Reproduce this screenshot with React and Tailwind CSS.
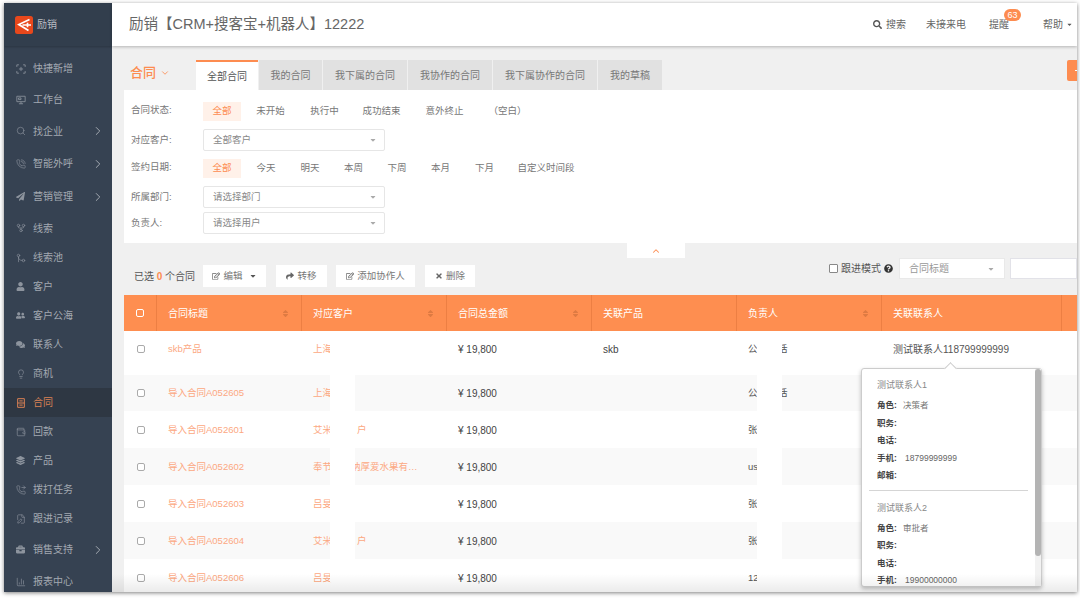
import { FaSearch, FaCaretDown, FaShare, FaTimes, FaQuestionCircle, FaSort, FaRegEdit, FaUser, FaComments, FaPaperPlane, FaBriefcase, FaLayerGroup, FaUserFriends } from 'react-icons/fa'
import { ChevronDown, ChevronRight, ChevronUp, Search, PhoneCall, Lightbulb, Wallet, FilePen, ChartColumn, GitFork, GitMerge, PhoneForwarded } from 'lucide-react'

function QuickAddIcon({ className }) {
  return (
    <svg viewBox="0 0 12 12" className={className} fill="none" stroke="currentColor" strokeWidth="1">
      <path d="M1 3.500V1h2.500M8.500 1H11v2.500M11 8.500V11H8.500M3.500 11H1V8.500M6 3.500v5M3.500 6h5" />
    </svg>
  )
}

function DeskIcon({ className }) {
  return (
    <svg viewBox="0 0 12 12" className={className} fill="none" stroke="currentColor" strokeWidth="1">
      <path d="M1 1.500h10v6.500H1zM6 8v2.500M3.500 10.500h5M3 3.500h3v2H3z" />
    </svg>
  )
}

function ContractIcon({ className }) {
  return (
    <svg viewBox="0 0 12 12" className={className} fill="none" stroke="currentColor" strokeWidth="1.200">
      <path d="M2 .8h8v10.400H2zM4 3.500h4M2 6h8M4 8.500h4" />
    </svg>
  )
}

const menu = [
  { label: '快捷新增', icon: QuickAddIcon, h: 'h-[31px]' },
  { label: '工作台', icon: DeskIcon, h: 'h-[31px]' },
  { label: '找企业', icon: Search, arrow: true, h: 'h-[32px]' },
  { label: '智能外呼', icon: PhoneCall, arrow: true, h: 'h-[33px]' },
  { label: '营销管理', icon: FaPaperPlane, arrow: true, h: 'h-[33px]', small: true },
  { label: '线索', icon: GitFork, h: 'h-[30px]' },
  { label: '线索池', icon: GitMerge, h: 'h-[29px]' },
  { label: '客户', icon: FaUser, h: 'h-[29px]', small: true },
  { label: '客户公海', icon: FaUserFriends, h: 'h-[29px]', small: true },
  { label: '联系人', icon: FaComments, h: 'h-[29px]', small: true },
  { label: '商机', icon: Lightbulb, h: 'h-[29px]' },
  { label: '合同', icon: ContractIcon, h: 'h-[29px]', active: true },
  { label: '回款', icon: Wallet, h: 'h-[29px]' },
  { label: '产品', icon: FaLayerGroup, h: 'h-[29px]', small: true },
  { label: '拨打任务', icon: PhoneForwarded, h: 'h-[29px]' },
  { label: '跟进记录', icon: FilePen, h: 'h-[29px]' },
  { label: '销售支持', icon: FaBriefcase, arrow: true, h: 'h-[33px]', small: true },
  { label: '报表中心', icon: ChartColumn, h: 'h-[31px]' },
]

const tabs = [
  { label: '全部合同', w: 'w-[62px]', active: true },
  { label: '我的合同', w: 'w-[63px]' },
  { label: '我下属的合同', w: 'w-[84px]' },
  { label: '我协作的合同', w: 'w-[84px]' },
  { label: '我下属协作的合同', w: 'w-[104px]' },
  { label: '我的草稿', w: 'w-[64px]' },
]

const rows = [
  { title: 'skb产品', customer: '上海', owner: '公', owner2: '话', product: 'skb', contact: '测试联系人118799999999', h: 'h-[44px] pb-[8px]' },
  { title: '导入合同A052605', customer: '上海', owner: '公', owner2: '话', h: 'h-[36px]', alt: true },
  { title: '导入合同A052601', customer: '艾米', customer2: '户', shift: 'ml-[1px]', owner: '张', h: 'h-[37px] pt-[1px]' },
  { title: '导入合同A052602', customer: '奉节', customer2: '纳厚爱水果有…', shift: '-ml-[5px]', owner: 'us', h: 'h-[37px] pt-[1px]', alt: true },
  { title: '导入合同A052603', customer: '吕旻', owner: '张', h: 'h-[37px] pt-[1px]' },
  { title: '导入合同A052604', customer: '艾米', customer2: '户', shift: 'ml-[1px]', owner: '张', h: 'h-[37px] pt-[1px]', alt: true },
  { title: '导入合同A052606', customer: '吕旻', owner: '12', h: 'h-[37px] pt-[1px]' },
]

const columns = [
  { label: '合同标题', w: 'w-[145px]', sort: true },
  { label: '对应客户', w: 'w-[145px]', sort: true },
  { label: '合同总金额', w: 'w-[145px]', sort: true },
  { label: '关联产品', w: 'w-[145px]' },
  { label: '负责人', w: 'w-[145px]', sort: true },
  { label: '关联联系人', w: 'w-[180px]' },
]

function Logo() {
  return (
    <svg viewBox="0 0 18 18" className="w-[18px] h-[18px]">
      <rect width="18" height="18" rx="2.500" fill="#e8481c" />
      <path d="M14.500 3.500 L3.800 8.600 L13.500 14.500 M7.500 9 L16 9 M12.500 6.800 L12.500 11.200" stroke="#fff" strokeWidth="1.700" fill="none" />
    </svg>
  )
}

function Sidebar() {
  return (
    <aside className="w-[108px] shrink-0 bg-[#364252] text-[#a3a9b1] text-[10px] flex flex-col">
      <div className="h-[43px] shrink-0 bg-[#323e4d] flex items-center pl-[11px] gap-[4px] text-[#b9bdc3] shadow-[0_1px_2px_rgba(0,0,0,0.2)]">
        <Logo />
        <span>励销</span>
      </div>
      <div className="pt-[7px]">
        {menu.map((m) => {
          const Icon = m.icon
          return (
            <div key={m.label} className={`${m.h} flex items-center pl-[12px] pr-[7px] ${m.active ? 'bg-[#2e3743] text-[#d98155]' : ''}`}>
              <span className={`w-[9px] flex justify-center mr-[8px] ${m.active ? '' : 'text-[#8d949e]'}`}>
                <Icon className={m.small ? 'w-[9px] h-[9px] shrink-0' : 'w-[10px] h-[10px] shrink-0'} strokeWidth={m.small ? undefined : 1.500} />
              </span>
              <span className="text-[10px]">{m.label}</span>
              {m.arrow && <ChevronRight className="w-[14px] h-[14px] ml-auto" strokeWidth={1.700} />}
            </div>
          )
        })}
      </div>
    </aside>
  )
}

function Topbar() {
  return (
    <header className="h-[43px] shrink-0 bg-white flex items-center pl-[17px] pr-[4px] shadow-[0_1px_3px_rgba(0,0,0,0.25)] relative z-10">
      <h1 className="text-[14.500px] text-[#666] font-normal">励销【CRM+搜客宝+机器人】12222</h1>
      <div className="ml-auto flex items-center text-[10px] text-[#666]">
        <FaSearch className="w-[9px] h-[9px] text-[#555] mr-[4px]" />
        <span className="mr-[20px]">搜索</span>
        <span className="mr-[23px]">未接来电</span>
        <span className="relative mr-[34px]">
          提醒
          <span className="absolute left-[15px] -top-[8px] w-[17px] h-[12px] rounded-full bg-[#fd8c50] text-white text-[9px] leading-[12px] text-center">63</span>
        </span>
        <span>帮助</span>
        <FaCaretDown className="w-[7px] h-[7px] ml-[3px] text-[#555]" />
      </div>
    </header>
  )
}

function Chip({ children, active, className = '' }) {
  return (
    <span className={`h-[19px] flex items-center justify-center text-[9.500px] ${active ? 'bg-[#fff1e9] text-[#fd8c50]' : 'text-[#777]'} ${className}`}>
      {children}
    </span>
  )
}

function Select({ text }) {
  return (
    <div className="w-[182px] h-[22px] border border-[#e6e6e6] rounded-[2px] bg-white flex items-center px-[9px] pr-[7px] text-[9.500px] text-[#888]">
      <span>{text}</span>
      <FaCaretDown className="w-[8px] h-[8px] ml-auto text-[#aaa]" />
    </div>
  )
}

function FilterRow({ label, children, select, className = '' }) {
  return (
    <div className={`flex items-start ${className}`}>
      <span className={`w-[79px] pl-[7px] text-[9.500px] text-[#777] ${select ? 'leading-[22px]' : 'leading-[14px] pt-[1px]'}`}>{label}</span>
      {children}
    </div>
  )
}

function Filters() {
  return (
    <section className="h-[153px] bg-white pt-[12px] flex flex-col text-[#777] shrink-0">
      <FilterRow label="合同状态:" className="h-[27px]">
        <div className="flex">
          <Chip active className="w-[38px]">全部</Chip>
          <Chip className="w-[59px]">未开始</Chip>
          <Chip className="w-[49px]">执行中</Chip>
          <Chip className="w-[65px]">成功结束</Chip>
          <Chip className="w-[61px]">意外终止</Chip>
          <Chip className="w-[65px]">（空白）</Chip>
        </div>
      </FilterRow>
      <FilterRow select label="对应客户:" className="h-[30px]">
        <Select text="全部客户" />
      </FilterRow>
      <FilterRow label="签约日期:" className="h-[27px]">
        <div className="flex">
          <Chip active className="w-[38px]">全部</Chip>
          <Chip className="w-[50px]">今天</Chip>
          <Chip className="w-[38px]">明天</Chip>
          <Chip className="w-[49px]">本周</Chip>
          <Chip className="w-[38px]">下周</Chip>
          <Chip className="w-[49px]">本月</Chip>
          <Chip className="w-[39px]">下月</Chip>
          <Chip className="w-[84px]">自定义时间段</Chip>
        </div>
      </FilterRow>
      <FilterRow select label="所属部门:" className="h-[26px]">
        <Select text="请选择部门" />
      </FilterRow>
      <FilterRow select label="负责人:" className="h-[22px]">
        <Select text="请选择用户" />
      </FilterRow>
    </section>
  )
}

function ToolButton({ icon: Icon, children, caret, className = '' }) {
  return (
    <button className={`h-[22px] bg-white flex items-center justify-center gap-[3px] text-[9.500px] text-[#777] ${className}`}>
      <Icon className="w-[8px] h-[8px] text-[#666]" />
      {children}
      {caret && <FaCaretDown className="w-[8px] h-[8px] ml-[3px] text-[#555]" />}
    </button>
  )
}

function Toolbar() {
  return (
    <div className="h-[52px] shrink-0 relative flex items-start">
      <div className="absolute left-[503px] top-0 w-[58px] h-[15px] bg-white flex items-center justify-center">
        <ChevronUp className="w-[10px] h-[10px] text-[#fd8c50]" strokeWidth={2.500} />
      </div>
      <div className="flex items-center mt-[22px]">
        <span className="w-[79px] pl-[10px] text-[10px] text-[#555]">已选 <b className="text-[#fd8c50] font-bold">0</b> 个合同</span>
        <ToolButton icon={FaRegEdit} caret className="w-[63px] mr-[10px]">编辑</ToolButton>
        <ToolButton icon={FaShare} className="w-[51px] mr-[9px]">转移</ToolButton>
        <ToolButton icon={FaRegEdit} className="w-[79px] mr-[10px]">添加协作人</ToolButton>
        <ToolButton icon={FaTimes} className="w-[50px]">删除</ToolButton>
      </div>
      <div className="ml-auto flex items-center mt-[15px]">
        <span className="w-[9px] h-[9px] border border-[#888] rounded-[1px] bg-white mr-[3px]"></span>
        <span className="text-[10px] text-[#555] mr-[3px]">跟进模式</span>
        <FaQuestionCircle className="w-[9px] h-[9px] text-[#333] mr-[6px]" />
        <div className="w-[106px] h-[21px] bg-white border border-[#e9e9e9] flex items-center px-[9px] text-[10px] text-[#999] mr-[5px]">
          合同标题
          <FaCaretDown className="w-[8px] h-[8px] ml-auto text-[#aaa]" />
        </div>
        <div className="w-[67px] h-[21px] bg-white border border-[#e2e2e8]"></div>
      </div>
    </div>
  )
}

function Checkbox({ light }) {
  return <span className={`block w-[8px] h-[8px] rounded-[2px] border ${light ? 'border-white' : 'border-[#aaa] bg-white'}`}></span>
}

function Table() {
  return (
    <div className="flex-1 min-h-0 overflow-hidden">
      <div className="h-[36px] flex bg-[#fe8e50] text-white text-[10px]">
        <div className="w-[33px] flex items-center justify-center border-r border-[#ed7f43]"><Checkbox light /></div>
        {columns.map((c) => (
          <div key={c.label} className={`${c.w} shrink-0 flex items-center px-[11px] border-r border-[#ed7f43]`}>
            <span>{c.label}</span>
            {c.sort && <FaSort className="ml-auto w-[9px] h-[9px] text-[#de7a42]" />}
          </div>
        ))}
        <div className="flex-1"></div>
      </div>
      {rows.map((r) => (
        <div key={r.title} className={`${r.h} flex items-center text-[9.500px] text-[#555] ${r.alt ? 'bg-[#f9f9f9]' : 'bg-white'}`}>
          <div className="w-[33px] shrink-0 flex justify-center"><Checkbox /></div>
          <div className="w-[145px] shrink-0 pl-[11px] text-[#fca882]">{r.title}</div>
          <div className="w-[145px] shrink-0 pl-[11px] text-[#fca882] flex">
            <span className="w-[43px]">{r.customer}</span>
            {r.customer2 && <span className={r.shift}>{r.customer2}</span>}
          </div>
          <div className="w-[145px] shrink-0 pl-[11px] text-[10px] text-[#444]">¥ 19,800</div>
          <div className="w-[145px] shrink-0 pl-[11px] text-[10px] text-[#444]">{r.product}</div>
          <div className="w-[145px] shrink-0 pl-[11px] flex">
            <span className="w-[30px]">{r.owner}</span>
            {r.owner2 && <span>{r.owner2}</span>}
          </div>
          <div className="w-[180px] shrink-0 pl-[11px] text-[10px]">{r.contact}</div>
        </div>
      ))}
    </div>
  )
}

function ContactBlock({ name, items }) {
  return (
    <div>
      <div className="text-[9px] text-[#888] h-[14px] leading-[14px]">{name}</div>
      <div className="mt-[5px]">
        {items.map(([k, v]) => (
          <div key={k} className="h-[17.500px] flex items-center text-[8.500px]">
            <b className="text-[#444] font-bold w-[26px] shrink-0">{k}:</b>
            <span className={k === '手机' ? 'text-[#666] ml-[2px]' : 'text-[#777]'}>{v}</span>
          </div>
        ))}
      </div>
    </div>
  )
}

function ContactPopover() {
  return (
    <div className="absolute left-[857px] top-[365px] w-[181px] h-[219px] bg-white border border-[#ccc] rounded-[3px] shadow-[0_2px_4px_rgba(0,0,0,0.25)] z-20">
      <span className="absolute left-[84px] -top-[5px] w-[9px] h-[9px] rotate-45 bg-white border-l border-t border-[#ccc]"></span>
      <div className="h-full overflow-hidden pl-[15px] pt-[9px] relative">
        <ContactBlock name="测试联系人1" items={[['角色', '决策者'], ['职务', ''], ['电话', ''], ['手机', '18799999999'], ['邮箱', '']]} />
        <div className="h-px bg-[#d5d5d5] -ml-[8px] mr-[13px] mt-[5px] mb-[10px]"></div>
        <ContactBlock name="测试联系人2" items={[['角色', '审批者'], ['职务', ''], ['电话', ''], ['手机', '19900000000']]} />
        <div className="absolute right-0 top-0 w-[6px] h-full bg-[#f2f2f2]">
          <div className="h-[187px] bg-[#b4b4b4] rounded-[3px]"></div>
        </div>
      </div>
    </div>
  )
}

export default function App() {
  return (
    <div className="w-[1080px] h-[598px] bg-white pl-[4px] pt-[3px] font-['Liberation_Sans','Noto_Sans_CJK_SC',sans-serif] overflow-hidden">
      <div className="w-[1073px] h-[589px] flex relative overflow-hidden shadow-[0_1px_4px_rgba(0,0,0,0.5)]">
        <Sidebar />
        <div className="flex-1 min-w-0 flex flex-col bg-[#f0f0f0]">
          <Topbar />
          <div className="flex-1 min-h-0 flex flex-col pl-[12px]">
            <div className="h-[44px] shrink-0 flex items-end relative">
              <div className="w-[72px] flex items-center gap-[4px] pl-[6px] text-[13px] font-medium text-[#fd8c50] self-center mt-[10px]">
                合同
                <ChevronDown className="w-[10px] h-[10px] text-[#fd8c50]" strokeWidth={2} />
              </div>
              <div className="flex h-[30px]">
                {tabs.map((t) => (
                  <div key={t.label} className={`${t.w} mr-px flex items-center justify-center text-[10px] ${t.active ? 'bg-white text-[#555] border-t-2 border-[#fd8c50]' : 'bg-[#e1e1e1] text-[#777]'}`}>
                    {t.label}
                  </div>
                ))}
              </div>
              <div className="absolute right-0 top-[14px] w-[10px] h-[21px] bg-[#fd8c50] rounded-l-[2px] flex items-center justify-end">
                <span className="w-[2px] h-px bg-white"></span>
              </div>
            </div>
            <Filters />
            <Toolbar />
            <Table />
          </div>
        </div>
        <ContactPopover />
        {/* white strips hide personal data in the table */}
        <div className="absolute left-[326px] top-[337px] w-[25px] h-[242px] bg-white z-10"></div>
        <div className="absolute left-[753px] top-[337px] w-[25px] h-[242px] bg-white z-10"></div>
        <div className="absolute left-[108px] right-0 bottom-0 h-[18px] bg-gradient-to-b from-transparent to-[#00000014] z-30 pointer-events-none"></div>
      </div>
    </div>
  )
}
